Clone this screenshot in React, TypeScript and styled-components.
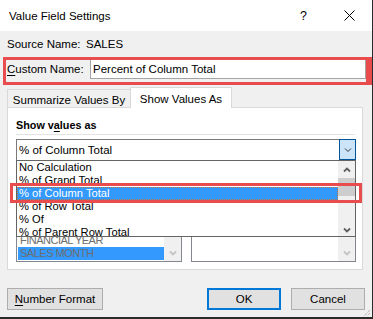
import React from "react";
import styled, { createGlobalStyle } from "styled-components";

const colors = {
  face: "#f0f0f0",
  annot: "#e84c4c",
  select: "#3399ff",
  tabLine: "#d9d9d9",
  dark: "#2b2b2b",
};

const showAsOptions = [
  "No Calculation",
  "% of Grand Total",
  "% of Column Total",
  "% of Row Total",
  "% Of",
  "% of Parent Row Total",
];

// only the last two base fields peek out below the open dropdown
const baseFields = ["FINANCIAL YEAR", "SALES MONTH"];

const Chevron: React.FC<{ up?: boolean; color?: string; bold?: boolean }> = ({
  up,
  color = "#333",
  bold,
}) => (
  <svg width="8" height="6" viewBox="0 0 8 6">
    <path
      d={up ? "M1 4.5 L4 1.5 L7 4.5" : "M1 1.5 L4 4.5 L7 1.5"}
      fill="none"
      stroke={color}
      strokeWidth={bold ? 1.8 : 1}
    />
  </svg>
);

const App: React.FC = () => {
  return (
    <>
      <GlobalStyle />
      <Window>
        <TitleBar>
          <Title>Value Field Settings</Title>
          <HelpButton>?</HelpButton>
          <CloseButton>
            <svg width="11" height="11" viewBox="0 0 11 11">
              <path d="M0.5 0.5 L10.5 10.5 M10.5 0.5 L0.5 10.5" stroke="#000" strokeWidth="1" />
            </svg>
          </CloseButton>
        </TitleBar>

        <SourceRow>
          <FieldLabel>Source Name:</FieldLabel>
          <span>SALES</span>
        </SourceRow>

        <CustomNameBox>
          <CustomLabel>
            <u>C</u>ustom Name:
          </CustomLabel>
          <NameInput>Percent of Column Total</NameInput>
        </CustomNameBox>

        <TabStrip>
          <Tab>Summarize Values By</Tab>
          <Tab active>Show Values As</Tab>
        </TabStrip>

        <Panel>
          <GroupLabel>
            Show v<u>a</u>lues as
          </GroupLabel>
          <Separator />
          <ComboWrap>
            <Combo>
              <ComboText>% of Column Total</ComboText>
              <ComboButton>
                <Chevron />
              </ComboButton>
            </Combo>
            <DropList>
              <DropItems>
                {showAsOptions.map((o) => (
                  <DropItem key={o} selected={o === "% of Column Total"}>
                    {o}
                  </DropItem>
                ))}
              </DropItems>
              <ScrollBar>
                <ScrollArrow>
                  <Chevron up bold color="#606060" />
                </ScrollArrow>
                <ScrollThumb />
                <ScrollTrack />
                <ScrollArrow low>
                  <Chevron bold color="#606060" />
                </ScrollArrow>
              </ScrollBar>
            </DropList>
          </ComboWrap>

          <BaseRow>
            <ListBox>
              <ListItems>
                {baseFields.map((f) => (
                  <ListItem key={f} selected={f === "SALES MONTH"}>
                    {f}
                  </ListItem>
                ))}
              </ListItems>
              <ListScroll>
                <ListScrollTrack />
                <ListScrollButton>
                  <Chevron bold color="#c4c4c4" />
                </ListScrollButton>
              </ListScroll>
            </ListBox>
            <ListBox>
              <ListItems />
              <ListScroll>
                <ListScrollTrack />
                <ListScrollButton>
                  <Chevron bold color="#c4c4c4" />
                </ListScrollButton>
              </ListScroll>
            </ListBox>
          </BaseRow>
        </Panel>

        <Footer>
          <Button width={96}>
            <u>N</u>umber Format
          </Button>
          <Spacer />
          <Button width={74} primary>
            OK
          </Button>
          <Button width={74}>Cancel</Button>
        </Footer>

        <Highlight />
        <Grip>
          <svg width="8" height="8" viewBox="0 0 8 8">
            <path d="M7 1 L1 7 M7 4 L4 7" stroke="#9a9a9a" strokeWidth="1" strokeDasharray="1 1" />
          </svg>
        </Grip>
      </Window>
    </>
  );
};

export default App;

// styled

const GlobalStyle = createGlobalStyle`
  html, body {
    margin: 0;
    padding: 0;
    background: ${colors.face};
  }
  body {
    font-family: "Liberation Sans", Arial, sans-serif;
    font-size: 11.5px;
    color: #000;
  }
  u {
    text-decoration-thickness: 1px;
    text-underline-offset: 2px;
  }
`;

const Window = styled.div`
  position: relative;
  width: 373px;
  height: 319px;
  box-sizing: border-box;
  border-right: 1px solid ${colors.dark};
  border-bottom: 2px solid ${colors.dark};
  background: ${colors.face};
  display: flex;
  flex-direction: column;
  overflow: hidden;
`;

const TitleBar = styled.div`
  height: 31px;
  flex-shrink: 0;
  background: #fff;
  display: flex;
  align-items: center;
  padding-left: 9px;
`;

const Title = styled.div`
  flex: 1;
  font-size: 11.5px;
  line-height: 14px;
`;

const HelpButton = styled.div`
  font-size: 12.5px;
  line-height: 14px;
  margin-right: 37px;
`;

const CloseButton = styled.div`
  display: flex;
  margin-right: 17px;
`;

const SourceRow = styled.div`
  height: 26px;
  flex-shrink: 0;
  display: flex;
  align-items: center;
  padding-left: 7px;
  line-height: 14px;
`;

const FieldLabel = styled.span`
  width: 79px;
`;

const CustomNameBox = styled.div`
  margin-left: 3px;
  width: 369px;
  height: 28px;
  flex-shrink: 0;
  box-sizing: border-box;
  border: 3px solid ${colors.annot};
  border-right-width: 6px;
  display: flex;
  align-items: flex-start;
`;

const CustomLabel = styled.div`
  width: 83px;
  padding-left: 1px;
  line-height: 19px;
`;

const NameInput = styled.div`
  width: 276px;
  height: 19px;
  box-sizing: border-box;
  border: 1px solid #a5a5a5;
  border-top: none;
  background: #fff;
  padding-left: 2px;
  line-height: 18px;
`;

const TabStrip = styled.div`
  margin-top: 2px;
  height: 20px;
  flex-shrink: 0;
  padding-left: 7px;
  display: flex;
  align-items: flex-end;
  position: relative;
  z-index: 1;
`;

const Tab = styled.div<{ active?: boolean }>`
  box-sizing: border-box;
  width: ${(p) => (p.active ? 102 : 123)}px;
  height: ${(p) => (p.active ? 21 : 18)}px;
  margin-bottom: ${(p) => (p.active ? -1 : 0)}px;
  background: ${(p) => (p.active ? "#fff" : colors.face)};
  border: 1px solid ${colors.tabLine};
  border-bottom: none;
  border-right: ${(p) => (p.active ? `1px solid ${colors.tabLine}` : "none")};
  display: flex;
  align-items: flex-end;
  justify-content: center;
  padding-bottom: ${(p) => (p.active ? 2 : 0)}px;
  line-height: 14px;
`;

const Panel = styled.div`
  margin-left: 7px;
  width: 356px;
  height: 163px;
  flex-shrink: 0;
  box-sizing: border-box;
  border: 1px solid ${colors.tabLine};
  background: #fff;
  padding: 0 6px 0 8px;
  display: flex;
  flex-direction: column;
`;

const GroupLabel = styled.div`
  margin-top: 10px;
  font-weight: bold;
  font-size: 10.8px;
  line-height: 14px;
`;

const Separator = styled.div`
  margin-top: 2px;
  height: 1px;
  width: 339px;
  background: #e3e3e3;
`;

const ComboWrap = styled.div`
  position: relative;
  margin-top: 4px;
`;

const Combo = styled.div`
  height: 21px;
  box-sizing: border-box;
  border: 1px solid #7a7a7a;
  border-bottom: none;
  display: flex;
`;

const ComboText = styled.div`
  flex: 1;
  padding-left: 2px;
  line-height: 20px;
`;

const ComboButton = styled.div`
  width: 17px;
  height: 21px;
  box-sizing: border-box;
  margin: -1px -1px 0 0;
  background: #cce4f7;
  border: 1px solid #005499;
  display: flex;
  align-items: center;
  justify-content: center;
`;

const DropList = styled.div`
  position: absolute;
  top: 100%;
  left: 0;
  right: 0;
  height: 77px;
  box-sizing: border-box;
  border: 1px solid #646464;
  background: #fff;
  display: flex;
  z-index: 2;
  overflow: hidden;
`;

const DropItems = styled.div`
  flex: 1;
  display: flex;
  flex-direction: column;
`;

const DropItem = styled.div<{ selected?: boolean }>`
  height: 13px;
  flex-shrink: 0;
  font-size: 11.2px;
  line-height: 13px;
  padding-left: 2px;
  white-space: nowrap;
  background: ${(p) => (p.selected ? colors.select : "transparent")};
  color: ${(p) => (p.selected ? "#fff" : "#000")};
  outline: ${(p) => (p.selected ? "1px dotted #b9773f" : "none")};
  outline-offset: -1px;
`;

const ScrollBar = styled.div`
  width: 17px;
  background: ${colors.face};
  display: flex;
  flex-direction: column;
`;

const ScrollArrow = styled.div<{ low?: boolean }>`
  height: 17px;
  display: flex;
  align-items: ${(p) => (p.low ? "flex-end" : "center")};
  padding-bottom: ${(p) => (p.low ? 3 : 0)}px;
  justify-content: center;
`;

const ScrollThumb = styled.div`
  height: 18px;
  background: #cdcdcd;
`;

const ScrollTrack = styled.div`
  flex: 1;
`;

const BaseRow = styled.div`
  margin-top: 21px;
  display: grid;
  grid-template-columns: 166px 165px;
  column-gap: 9px;
`;

const ListBox = styled.div`
  height: 81px;
  box-sizing: border-box;
  border: 1px solid #828790;
  display: flex;
`;

const ListItems = styled.div`
  flex: 1;
  padding: 0 0 1px 1px;
  display: flex;
  flex-direction: column;
  justify-content: flex-end;
`;

const ListItem = styled.div<{ selected?: boolean }>`
  height: 13px;
  line-height: 13px;
  padding-left: 2px;
  font-size: 11px;
  letter-spacing: -0.5px;
  white-space: nowrap;
  color: #6d6d6d;
  background: ${(p) => (p.selected ? colors.select : "transparent")};
`;

const ListScroll = styled.div`
  width: 17px;
  display: flex;
  flex-direction: column;
  background: ${colors.face};
`;

const ListScrollTrack = styled.div`
  flex: 1;
`;

const ListScrollButton = styled.div`
  height: 17px;
  display: flex;
  align-items: center;
  justify-content: center;
`;

const Footer = styled.div`
  display: flex;
  padding: 18px 7px 0 7px;
  gap: 10px;
`;

const Spacer = styled.div`
  flex: 1;
`;

const Button = styled.div<{ width: number; primary?: boolean }>`
  width: ${(p) => p.width}px;
  height: 22px;
  box-sizing: border-box;
  background: #e1e1e1;
  border: ${(p) => (p.primary ? "2px solid #0078d7" : "1px solid #adadad")};
  display: flex;
  align-items: center;
  justify-content: center;
  line-height: 14px;
`;

const Highlight = styled.div`
  position: absolute;
  left: 10px;
  top: 183px;
  width: 352px;
  height: 20px;
  box-sizing: border-box;
  border: 3px solid ${colors.annot};
  z-index: 5;
  pointer-events: none;
`;

const Grip = styled.div`
  position: absolute;
  right: 1px;
  bottom: 0;
  display: flex;
`;
